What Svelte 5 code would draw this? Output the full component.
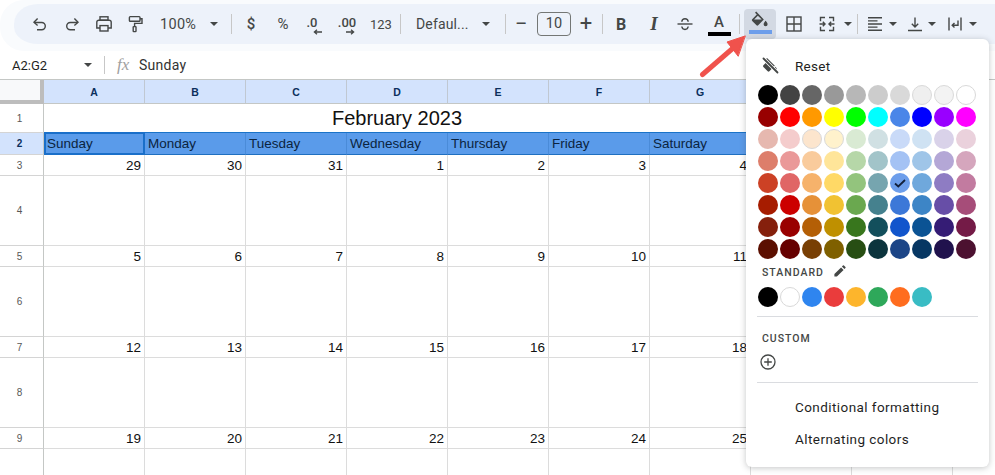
<script>
  const palette = [
    ['#000000','#434343','#666666','#999999','#b7b7b7','#cccccc','#d9d9d9','#efefef','#f3f3f3','#ffffff'],
    ['#980000','#ff0000','#ff9900','#ffff00','#00ff00','#00ffff','#4a86e8','#0000ff','#9900ff','#ff00ff'],
    ['#e6b8af','#f4cccc','#fce5cd','#fff2cc','#d9ead3','#d0e0e3','#c9daf8','#cfe2f3','#d9d2e9','#ead1dc'],
    ['#dd7e6b','#ea9999','#f9cb9c','#ffe599','#b6d7a8','#a2c4c9','#a4c2f4','#9fc5e8','#b4a7d6','#d5a6bd'],
    ['#cc4125','#e06666','#f6b26b','#ffd966','#93c47d','#76a5af','#6d9eeb','#6fa8dc','#8e7cc3','#c27ba0'],
    ['#a61c00','#cc0000','#e69138','#f1c232','#6aa84f','#45818e','#3c78d8','#3d85c6','#674ea7','#a64d79'],
    ['#85200c','#990000','#b45f06','#bf9000','#38761d','#134f5c','#1155cc','#0b5394','#351c75','#741b47'],
    ['#5b0f00','#660000','#783f04','#7f6000','#274e13','#0c343d','#1c4587','#073763','#20124d','#4c1130']
  ].flat();
  const standard = ['#000000','#ffffff','#2f85ef','#ea3c3c','#fdb52c','#2ea85a','#ff6d1f','#39bcc4'];
  const light = new Set(['#efefef','#f3f3f3','#ffffff','#fce5cd','#fff2cc']);
  const letters = ['A','B','C','D','E','F','G','H','I'];
  const days = ['Sunday','Monday','Tuesday','Wednesday','Thursday','Friday','Saturday'];
  const weeks = [
    { n: 3, vals: [29,30,31,1,2,3,4] },
    { n: 5, vals: [5,6,7,8,9,10,11] },
    { n: 7, vals: [12,13,14,15,16,17,18] },
    { n: 9, vals: [19,20,21,22,23,24,25] }
  ];
  const extra = [0,0];
</script>

<div class="page">
  <div class="toolbar">
    <span class="b">
      <svg viewBox="0 0 18 18"><path d="M3.500 7.500h7.200a3.600 3.600 0 0 1 0 7.200H6"/><path d="M6.600 3.600 3 7.300l3.600 3.200"/></svg>
    </span>
    <span class="b">
      <svg viewBox="0 0 18 18"><path d="M14.500 7.500H7.300a3.600 3.600 0 0 0 0 7.200H12"/><path d="M11.400 3.600 15 7.300l-3.600 3.200"/></svg>
    </span>
    <span class="b">
      <svg viewBox="0 0 18 18"><rect x="5" y="1.800" width="8" height="3.400"/><path d="M5 13H1.800V7.200a2 2 0 0 1 2-2h10.400a2 2 0 0 1 2 2V13H13"/><rect x="5" y="10.600" width="8" height="5.400"/></svg>
    </span>
    <span class="b b-paint">
      <svg viewBox="0 0 18 18"><rect x="3.400" y="1.600" width="10.600" height="4.600" rx=".8"/><path d="M14 3.800h2v4.600H8.600v3"/><rect x="7.200" y="11.600" width="2.800" height="5" rx=".5"/></svg>
    </span>
    <span class="zoomval">100%</span><i class="caret c-zoom"></i>
    <span class="sep s-a"></span>
    <span class="t t-dollar">$</span>
    <span class="t t-pct">%</span>
    <span class="t t-dec">.0<svg class="under" viewBox="0 0 10 6"><path d="M9 3H1.600M4 .8 1.400 3 4 5.200"/></svg></span>
    <span class="t t-inc">.00<svg class="under" viewBox="0 0 10 6"><path d="M1 3h7.400M6 .8 8.600 3 6 5.200"/></svg></span>
    <span class="t t-123">123</span>
    <span class="sep s-b"></span>
    <span class="fontname">Defaul...</span><i class="caret c-font"></i>
    <span class="sep s-c"></span>
    <span class="pm pm-minus">−</span>
    <span class="sizebox">10</span>
    <span class="pm">+</span>
    <span class="sep s-d"></span>
    <span class="fmt bold">B</span>
    <span class="fmt ital">I</span>
    <span class="b b-strike">
      <svg viewBox="0 0 18 18"><path d="M1.500 9h15"/><path d="M5.800 6.800C6 4.800 7.400 3.800 9 3.800s3 1 3.200 3M5.800 11.500c.3 2 1.700 3 3.200 3s2.900-1 3.200-3"/></svg>
    </span>
    <span class="textcolor"><b>A</b><i></i></span>
    <span class="sep s-e"></span>
    <span class="fillbtn">
      <svg viewBox="0 0 20 16"><path class="fill" d="M6.200.6 5 1.800l1.800 1.800-4.600 4.600a1.200 1.200 0 0 0 0 1.700l4.300 4.300a1.200 1.200 0 0 0 1.700 0l5.600-5.600Z"/><path class="white" d="M7.900 4.700 11.700 8.500H4.100Z"/><path class="fill" d="M15.600 9.800s-2 2.100-2 3.400a2 2 0 0 0 4 0c0-1.300-2-3.400-2-3.400Z"/></svg>
      <i></i>
    </span>
    <span class="b b-border">
      <svg viewBox="0 0 18 18"><rect x="2" y="2" width="14" height="14"/><path d="M9 2v14M2 9h14"/></svg>
    </span>
    <span class="b b-merge">
      <svg viewBox="0 0 18 18"><path d="M7 2.500H2.500v3.700M7 15.500H2.500v-3.700M11 2.500h4.500v3.700M11 15.500h4.500v-3.700M1.500 9H7M4.800 6.800 7 9l-2.200 2.200M16.500 9H11M13.200 6.800 11 9l2.200 2.200"/></svg>
    </span>
    <i class="caret c-merge"></i>
    <span class="sep s-f"></span>
    <span class="b b-align">
      <svg viewBox="0 0 18 18"><path d="M2 2.800h14M2 5.900h9.500M2 9h14M2 12.100h9.500M2 15.200h14"/></svg>
    </span>
    <i class="caret c-align"></i>
    <span class="b b-valign">
      <svg viewBox="0 0 18 18"><path d="M2 15.500h14M9 2.500v9.500M5.800 8.800 9 12l3.200-3.200"/></svg>
    </span>
    <i class="caret c-valign"></i>
    <span class="b b-wrap">
      <svg viewBox="0 0 18 18"><path d="M3 2.500v13M15 2.500v13M12 5.500v4.800H6.500M8.500 8 6.200 10.300l2.300 2.300"/></svg>
    </span>
    <i class="caret c-wrap"></i>
  </div>

  <div class="formula">
    <span class="namebox">A2:G2</span><i class="caret c-name"></i>
    <span class="sep s-fx"></span>
    <span class="fx">fx</span>
    <span class="fval">Sunday</span>
  </div>

  <div class="sheet">
    <div class="corner"></div>
    {#each letters as l}
      <div class="colh">{l}</div>
    {/each}

    <div class="rowh">1</div>
    <div class="title">February 2023</div>
    <div class="cell"></div><div class="cell"></div>

    <div class="rowh active">2</div>
    {#each days as d, i}
      <div class="dayc" class:first={i === 0}>{d}</div>
    {/each}
    <div class="cell"></div><div class="cell"></div>

    {#each weeks as w}
      <div class="rowh">{w.n}</div>
      {#each w.vals as v}
        <div class="cell num">{v}</div>
      {/each}
      {#each extra as _}
        <div class="cell"></div>
      {/each}
      <div class="rowh">{w.n < 9 ? w.n + 1 : ''}</div>
      {#each w.vals as _}
        <div class="cell"></div>
      {/each}
      {#each extra as _}
        <div class="cell"></div>
      {/each}
    {/each}
  </div>

  <svg class="arrow" viewBox="0 0 50 44">
    <path d="M3.500 40.500 33 15" />
    <path class="head" d="M46 2 28 8 39 22Z" />
  </svg>

  <div class="menu">
    <div class="reset">
      <svg viewBox="0 0 20 20"><path d="M7 2 5.800 3.200 7.600 5 3.400 9.200a1.200 1.200 0 0 0 0 1.700l4.300 4.300a1.200 1.200 0 0 0 1.700 0l5.400-5.400Z"/><path d="M15.500 10.800s-1.400 1.500-1.400 2.500a1.400 1.400 0 0 0 2.800 0c0-1-1.400-2.500-1.400-2.500Z"/><path class="gap" d="M4 3 17 16"/><path class="slash" d="M3.500 2.500 17.500 16.500"/></svg>
      <span>Reset</span>
    </div>
    <div class="swatches">
      {#each palette as c, i}
        <span class="sw" class:ring={light.has(c)} style="background:{c}">
          {#if i === 46}
            <svg viewBox="0 0 14 14"><path d="M2 7.500 5.300 10.500 12 4"/></svg>
          {/if}
        </span>
      {/each}
    </div>
    <div class="label std">
      STANDARD
      <svg viewBox="0 0 14 14"><path d="M1.500 12.500v-2.700L8.700 2.600l2.700 2.700-7.200 7.200ZM9.600 1.700 10.700.6a.8.8 0 0 1 1.100 0l1.600 1.600a.8.8 0 0 1 0 1.100l-1.100 1.100Z"/></svg>
    </div>
    <div class="swatches">
      {#each standard as c}
        <span class="sw" class:ring={c === '#ffffff'} style="background:{c}"></span>
      {/each}
    </div>
    <hr class="rule r1" />
    <div class="label cus">CUSTOM</div>
    <svg class="plus" viewBox="0 0 16 16"><circle cx="8" cy="8" r="7"/><path d="M8 4.200v7.600M4.200 8h7.600"/></svg>
    <hr class="rule r2" />
    <div class="item i1">Conditional formatting</div>
    <div class="item">Alternating colors</div>
  </div>
</div>

<style>
  :global(body) { margin: 0; background: #fff; }
  .page {
    position: relative;
    width: 995px;
    height: 475px;
    overflow: hidden;
    font-family: Roboto, "Liberation Sans", sans-serif;
    color: #444746;
  }
  i { display: block; }

  /* toolbar */
  .toolbar {
    height: 40px;
    margin-left: 14px;
    padding-left: 10px;
    border-top: 4px solid #f9fbfd;
    border-bottom: 7px solid #f9fbfd;
    border-radius: 24px 0 0 24px;
    background: #edf2fa;
    display: flex;
    align-items: center;
    box-shadow: -14px 0 0 #f9fbfd;
  }
  .b { width: 32px; height: 32px; display: flex; align-items: center; justify-content: center; flex: none; }
  .b svg { width: 18px; height: 18px; fill: none; stroke: #444746; stroke-width: 1.400; }
  .b-paint { margin-left: -1px; }
  .caret { width: 0; height: 0; flex: none; border-left: 4.500px solid transparent; border-right: 4.500px solid transparent; border-top: 4.500px solid #444746; }
  .sep { width: 1px; height: 20px; background: #c7c7c7; flex: none; }
  .zoomval { font-size: 14.500px; letter-spacing: .3px; margin-left: 9px; width: 39px; flex: none; }
  .c-zoom { margin-left: 11px; }
  .s-a { margin-left: 13px; }
  .t { font-size: 12.500px; flex: none; text-align: center; position: relative; }
  .t-dollar { width: 12px; margin-left: 13px; font-size: 15px; font-weight: 500; }
  .t-pct { width: 12px; margin-left: 20px; font-size: 15px; }
  .t-dec { width: 18px; margin-left: 14px; top: -2px; font-size: 13px; font-weight: 500; }
  .t-inc { width: 20px; margin-left: 16px; top: -2px; font-size: 13px; font-weight: 500; }
  .under { position: absolute; width: 10px; height: 6px; right: -2px; top: 14px; fill: none; stroke: #444746; stroke-width: 1.300; }
  .t-inc .under { right: 2px; }
  .t-123 { width: 20px; margin-left: 13px; font-size: 13px; }
  .s-b { margin-left: 10px; }
  .fontname { font-size: 14px; margin-left: 15px; width: 54px; white-space: nowrap; flex: none; letter-spacing: .15px; }
  .c-font { margin-left: 12px; }
  .s-c { margin-left: 15px; }
  .pm { font-size: 22px; line-height: 20px; width: 16px; text-align: center; flex: none; }
  .pm-minus { margin-left: 7px; }
  .sizebox {
    width: 32px; height: 22px; margin: 0 7px 0 8px; border: 1px solid #747775; border-radius: 4px;
    font-size: 14.500px; line-height: 22px; text-align: center; flex: none;
  }
  .s-d { margin-left: 8px; }
  .fmt { width: 32px; text-align: center; flex: none; font-family: Roboto, sans-serif; }
  .bold { font-weight: 700; font-size: 16px; margin-left: 2px; }
  .ital { font-style: italic; font-weight: 700; font-family: "Liberation Serif", serif; font-size: 19px; margin-left: 1px; }
  .b-strike { margin-left: -1px; }
  .textcolor { width: 24px; margin-left: 6px; flex: none; display: flex; flex-direction: column; align-items: center; margin-top: 2px; }
  .textcolor b { font-size: 15px; font-weight: 500; line-height: 15px; }
  .textcolor i { width: 23px; height: 4px; margin-top: 2px; background: #000; }
  .s-e { margin-left: 8px; }
  .fillbtn {
    width: 32px; height: 30px; margin-left: 4px; flex: none; border-radius: 4px; background: #d3d9e3;
    display: flex; flex-direction: column; align-items: center; justify-content: flex-start;
  }
  .fillbtn svg { width: 20px; height: 16px; margin-top: 2px; }
  .fill { fill: #444746; }
  .white { fill: #d3d9e3; }
  .fillbtn i { width: 23px; height: 4px; margin-top: 3px; background: #6d9eeb; }
  .b-border { margin-left: 2px; }
  .b-merge { margin-left: 1px; }
  .c-merge { margin-left: 1px; }
  .s-f { margin-left: 5px; }
  .b-align { margin-left: 1px; }
  .c-align { margin-left: -2px; }
  .b-valign { margin-left: 2px; }
  .c-valign { margin-left: -3px; }
  .b-wrap { margin-left: 3px; }
  .c-wrap { margin-left: -2px; }

  /* formula bar */
  .formula {
    height: 29px;
    display: flex;
    align-items: center;
    border-bottom: 1px solid #c4c7c5;
    box-sizing: border-box;
    font-size: 13px;
  }
  .namebox { margin-left: 12px; width: 72px; color: #1f1f1f; font-size: 13px; flex: none; }
  .c-name { border-left-width: 4px; border-right-width: 4px; border-top-width: 4px; }
  .s-fx { margin-left: 12px; height: 18px; }
  .fx { margin-left: 12px; width: 22px; font-family: "Liberation Serif", serif; font-style: italic; font-size: 17px; color: #a0a0a0; flex: none; }
  .fval { font-size: 14px; letter-spacing: .25px; color: #333; }

  /* sheet */
  .sheet {
    display: grid;
    grid-template-columns: 44px repeat(9, 101px);
    grid-template-rows: 24px 29px 22px 21px 70px 21px 70px 21px 70px 21px 70px;
    font-family: "Liberation Sans", Arial, sans-serif;
  }
  .corner {
    background: #f8f9fa;
    border-right: 4px solid #bdbdbd;
    border-bottom: 4px solid #bdbdbd;
    box-sizing: border-box;
  }
  .colh {
    background: #d3e3fd;
    border-right: 1px solid #c0c8d2;
    border-bottom: 1px solid #c4c7c5;
    box-sizing: border-box;
    color: #0b2f5c;
    font-size: 10.500px;
    font-weight: 700;
    display: flex; align-items: center; justify-content: center;
  }
  .rowh {
    border-right: 1px solid #c4c7c5;
    border-bottom: 1px solid #d4d4d4;
    box-sizing: border-box;
    color: #575757;
    font-size: 10px;
    display: flex; align-items: center; justify-content: center;
    padding-right: 4px;
    font-weight: 400;
    background: #fff;
  }
  .rowh.active { background: #d3e3fd; color: #0b2f5c; font-weight: 700; }
  .cell {
    border-right: 1px solid #dcdcdc;
    border-bottom: 1px solid #dcdcdc;
    box-sizing: border-box;
  }
  .num {
    font-size: 13.500px;
    color: #111;
    text-align: right;
    padding-right: 3px;
    line-height: 21px;
  }
  .title {
    grid-column: span 7;
    text-align: center;
    font-size: 20px;
    line-height: 29px;
    color: #111;
    border-right: 1px solid #dcdcdc;
    border-bottom: 1px solid #1a73c8;
    box-sizing: border-box;
  }
  .dayc {
    background: #5a9bea;
    border-right: 1px solid #4a8bd8;
    border-bottom: 1px solid #1f6fc0;
    box-sizing: border-box;
    color: #0b2440;
    font-size: 13.500px;
    line-height: 22px;
    padding-left: 3px;
    white-space: nowrap;
  }
  .dayc.first { border: 2px solid #1a6fc9; line-height: 20px; padding-left: 1px; margin-top: -1px; height: 23px; }

  /* arrow */
  .arrow { position: absolute; left: 699px; top: 34px; width: 50px; height: 44px; fill: none; }
  .arrow path { stroke: #f0524c; stroke-width: 5; stroke-linecap: round; }
  .arrow .head { fill: #f0524c; stroke-width: 1; stroke-linejoin: round; }

  /* menu */
  .menu {
    position: absolute;
    left: 746px;
    top: 39px;
    width: 243px;
    height: 428px;
    box-sizing: border-box;
    background: #fff;
    border-radius: 6px;
    box-shadow: 0 1px 6px rgba(60, 64, 67, .3);
    padding: 0 0 0 12px;
    color: #1f1f1f;
    font-size: 13.500px;
  }
  .reset { display: flex; align-items: center; height: 46px; box-sizing: border-box; padding-top: 8px; }
  .reset svg { width: 20px; height: 20px; margin-left: 2px; fill: #444746; stroke: none; }
  .reset .gap { stroke: #fff; stroke-width: 3.500; }
  .reset .slash { stroke: #444746; stroke-width: 1.800; stroke-linecap: round; }
  .reset span { margin-left: 15px; letter-spacing: .3px; }
  .swatches { display: grid; grid-template-columns: repeat(10, 20px); grid-auto-rows: 20px; gap: 2px; }
  .sw { display: flex; align-items: center; justify-content: center; border-radius: 50%; box-sizing: border-box; }
  .sw.ring { border: 1px solid #d9d9d9; }
  .sw svg { width: 14px; height: 14px; fill: none; stroke: #12203a; stroke-width: 1.800; }
  .label { font-size: 10.500px; font-weight: 500; letter-spacing: 1px; color: #444746; padding-left: 4px; }
  .std { display: flex; align-items: center; height: 16px; margin-top: 5px; margin-bottom: 7px; }
  .std svg { width: 13px; height: 13px; margin-left: 9px; fill: #444746; position: relative; top: -1px; }
  .rule { border: 0; height: 1px; background: #dadce0; margin: 0 0 0 -1px; width: 221px; }
  .r1 { margin-top: 9px; }
  .cus { margin-top: 15px; line-height: 13px; }
  .plus { display: block; width: 16px; height: 16px; margin: 9px 0 0 2px; fill: none; stroke: #444746; stroke-width: 1.300; }
  .r2 { margin-top: 12px; }
  .item { padding-left: 37px; line-height: 32px; letter-spacing: .43px; }
  .i1 { margin-top: 8px; }
</style>
